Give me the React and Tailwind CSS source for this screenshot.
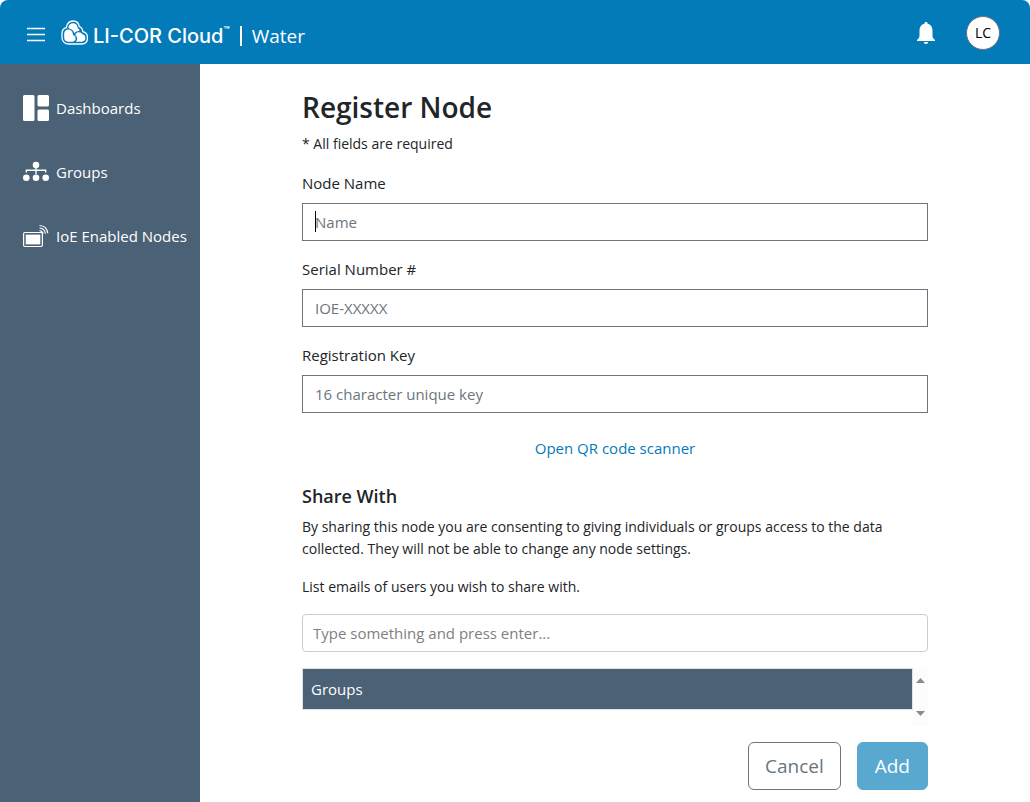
const navItems = [
    { label: "Dashboards", icon: DashboardIcon },
    { label: "Groups", icon: GroupsIcon },
    { label: "IoE Enabled Nodes", icon: NodeIcon },
];

const fields = [
    { id: "node-name", label: "Node Name", placeholder: "Name", caret: true },
    { id: "serial-number", label: "Serial Number #", placeholder: "IOE-XXXXX" },
    { id: "registration-key", label: "Registration Key", placeholder: "16 character unique key" },
];

// --- Icons ---
function DashboardIcon() {
    return (
        <svg className="h-[26px] w-[26px] shrink-0" viewBox="0 0 26 26" fill="currentColor" aria-hidden="true">
            <rect x="0" y="0" width="11.5" height="26" rx="1.5" />
            <rect x="14.5" y="0" width="11.5" height="11.5" rx="1.5" />
            <rect x="14.5" y="14.5" width="11.5" height="11.5" rx="1.5" />
        </svg>
    );
}

function GroupsIcon() {
    return (
        <svg className="h-[26px] w-[26px] shrink-0" viewBox="0 0 26 26" fill="currentColor" aria-hidden="true">
            <circle cx="13" cy="6" r="3.3" />
            <circle cx="3.3" cy="18.7" r="3.3" />
            <circle cx="13" cy="18.7" r="3.3" />
            <circle cx="22.7" cy="18.7" r="3.3" />
            <path d="M3.3 13.5v-2.2h19.4v2.2M13 8v7" fill="none" stroke="currentColor" strokeWidth="1.4" />
        </svg>
    );
}

function NodeIcon() {
    return (
        <svg className="h-[26px] w-[26px] shrink-0" viewBox="0 0 26 26" fill="none" stroke="currentColor" aria-hidden="true">
            <rect x="0.6" y="9.5" width="18.8" height="14" rx="1.2" strokeWidth="1.2" />
            <rect x="2.700" y="11.600" width="14.600" height="9.800" fill="currentColor" stroke="none" />
            <path d="M16.5 7.500c2 .3 3.2 1.500 3.600 3.400M16.500 5c3.300.3 5.500 2.400 6 5.700M16.500 2.500c4.800.3 7.800 3.400 8.300 7.800" strokeWidth="1.2" />
        </svg>
    );
}

function CloudLogo() {
    return (
        <svg className="h-[26px] w-[28px] shrink-0" viewBox="0 0 28 26" fill="none" aria-hidden="true">
            <path
                d="M8 24C3.8 24 1 21.4 1 17.8V13.3C1 10.3 2.8 8.3 5.3 7.7C6 3.4 8.5 1 12 1C15.5 1 17.8 3.2 18.3 6.7C20.5 7.4 21.6 9.1 21.8 11.7C25 12.4 26.5 14.7 26.5 17.8C26.5 21.4 24.3 24 20.5 24Z"
                stroke="white"
                strokeWidth="1.3"
            />
            <path d="M12 3.2C9.5 3.2 7.6 4.9 7.5 7.2C7.5 8 8 8.5 8.7 8.7C11 9.2 12.9 11 13.3 13.3C14 12.2 15.2 11.5 16.6 11.3C18 11.1 18.8 10.5 18.3 9.5C17.9 8.8 16.7 8.6 16.5 7.2C16.2 4.8 14.5 3.2 12 3.2Z" fill="white" />
            <path d="M7.3 9.5C4.9 9.5 3.2 11.2 3.2 13.6V17.8C3.2 20.3 5 21.8 7.5 21.8H11C13.3 21.8 14.7 20.4 14.7 18.3C14.7 16.6 13.5 15.9 12.5 15.3C11.9 14.9 11.9 14.3 11.8 13.5C11.5 11.2 9.7 9.5 7.3 9.5Z" fill="white" />
            <path d="M17.4 12.3C15.6 12.5 14.3 13.7 14.5 15C14.7 15.9 15.9 16.5 16.1 18C16.3 19.5 15.8 20.8 14.9 21.8H20.3C22.8 21.8 24.4 20.2 24.4 17.9C24.4 15.8 23 14.2 21 14C20.5 12.9 19.2 12.1 17.4 12.3Z" fill="white" />
        </svg>
    );
}

function BellIcon() {
    return (
        <svg className="h-6 w-5" viewBox="0 0 20 24" fill="currentColor" aria-hidden="true">
            <path d="M10 1C9 1 8.4 1.7 8.4 2.7C5.3 3.4 3.5 6 3.5 9.3V14.5C3.5 16.6 2.6 17.8 1 19V19.9H19V19C17.4 17.8 16.5 16.6 16.5 14.5V9.3C16.5 6 14.7 3.4 11.6 2.7C11.6 1.7 11 1 10 1ZM7.7 21C7.9 22.3 8.8 23 10 23C11.2 23 12.1 22.3 12.3 21Z" />
        </svg>
    );
}

// --- Layout ---
function Header() {
    return (
        <div className="bg-white">
            <header className="flex h-16 items-center justify-between rounded-t-lg bg-[#047bb9] pt-px pr-[30px] pl-[27px] text-white">
                <div className="flex items-center">
                    <button type="button" aria-label="Menu" className="mr-4 pt-[3px]">
                        <svg className="h-4 w-[18px]" viewBox="0 0 18 16" stroke="currentColor" strokeWidth="1.3" aria-hidden="true">
                            <path d="M0 2.5h18M0 8.5h18M0 14.5h18" />
                        </svg>
                    </button>
                    <CloudLogo />
                    <div className="flex items-center pt-[6px]">
                        <span className="ml-1 flex items-start font-['Inter'] text-xl leading-6 font-medium">
                            LI-COR Cloud
                            <span className="text-[10px] leading-3">™</span>
                        </span>
                        <span className="mx-[10px] h-5 w-[2px] bg-white" />
                        <span className="text-[19px] leading-6">Water</span>
                    </div>
                </div>
                <div className="flex items-center gap-[30px]">
                    <button type="button" aria-label="Notifications">
                        <BellIcon />
                    </button>
                    <button type="button" className="h-[34px] w-[34px] rounded-full border border-gray-500 bg-white text-sm text-black">
                        LC
                    </button>
                </div>
            </header>
        </div>
    );
}

function Sidebar() {
    return (
        <nav className="w-[200px] shrink-0 bg-[#4b6175] pt-3 text-white">
            {navItems.map(({ label, icon: Icon }) => (
                <a key={label} href="#" className="flex h-16 items-center gap-[7px] pl-[23px] text-[15px] whitespace-nowrap">
                    <Icon />
                    {label}
                </a>
            ))}
        </nav>
    );
}

function Field({ id, label, placeholder, caret }) {
    return (
        <div className="mb-4">
            <label htmlFor={id} className="mb-2 block text-[15px] leading-6">{label}</label>
            <div className="relative">
                <input
                    id={id}
                    type="text"
                    placeholder={placeholder}
                    className="block h-[38px] w-full border border-[#6c757d] px-3 text-[15px] placeholder:text-[#6c757d]"
                />
                {caret && <span className="absolute top-2 left-[13px] h-[21px] w-px bg-black" />}
            </div>
        </div>
    );
}

export default function App() {
    return (
        <div className="flex min-h-screen flex-col bg-white font-['Open_Sans',sans-serif] text-[#212529]">
            <Header />
            <div className="flex flex-1">
                <Sidebar />
                <main className="min-w-0 flex-1 px-4 pt-[25px] pb-3">
                    <form className="mx-auto max-w-[626px]">
                        <h1 className="mb-2 text-[28px] leading-9 font-semibold">Register Node</h1>
                        <p className="mb-4 text-sm leading-[22px]">* All fields are required</p>

                        {fields.map((field) => (
                            <Field key={field.id} {...field} />
                        ))}

                        <div className="pt-[7px] text-center text-[15px] leading-6">
                            <a href="#" className="text-[#047bb9]">Open QR code scanner</a>
                        </div>

                        <h2 className="mt-6 mb-2 text-lg leading-6 font-semibold">Share With</h2>
                        <p className="mb-4 text-sm leading-[22px]">
                            By sharing this node you are consenting to giving individuals or groups access to the data
                            collected. They will not be able to change any node settings.
                        </p>
                        <label htmlFor="emails" className="mb-4 block text-sm leading-[22px]">
                            List emails of users you wish to share with.
                        </label>
                        <input
                            id="emails"
                            type="text"
                            placeholder="Type something and press enter..."
                            className="mb-4 block h-[38px] w-full rounded border border-[#ccc] px-[10px] text-[15px] placeholder:text-[#808080]"
                        />

                        <div className="mb-4 flex h-[58px]">
                            <table className="h-[42px] flex-1 border border-[#dee2e6]">
                                <thead>
                                    <tr className="bg-[#4b6175] text-left text-[15px] text-white">
                                        <th scope="col" className="px-2 font-normal">Groups</th>
                                    </tr>
                                </thead>
                            </table>
                            <div className="flex w-[15px] flex-col items-center justify-between bg-[#fcfcfc] py-[10px] text-[#8b8b8b]">
                                <svg className="h-[5px] w-[9px]" viewBox="0 0 9 5" fill="currentColor" aria-hidden="true">
                                    <path d="M0 5L4.5 0L9 5Z" />
                                </svg>
                                <svg className="h-[5px] w-[9px]" viewBox="0 0 9 5" fill="currentColor" aria-hidden="true">
                                    <path d="M0 0L4.5 5L9 0Z" />
                                </svg>
                            </div>
                        </div>

                        <div className="flex justify-end gap-4 text-[19px]">
                            <button type="button" className="h-12 rounded-md border border-[#6c757d] px-4 text-[#6c757d]">
                                Cancel
                            </button>
                            <button type="button" className="h-12 rounded-md border border-[#59a8d0] bg-[#59a8d0] px-[17px] text-white">
                                Add
                            </button>
                        </div>
                    </form>
                </main>
            </div>
        </div>
    );
}
